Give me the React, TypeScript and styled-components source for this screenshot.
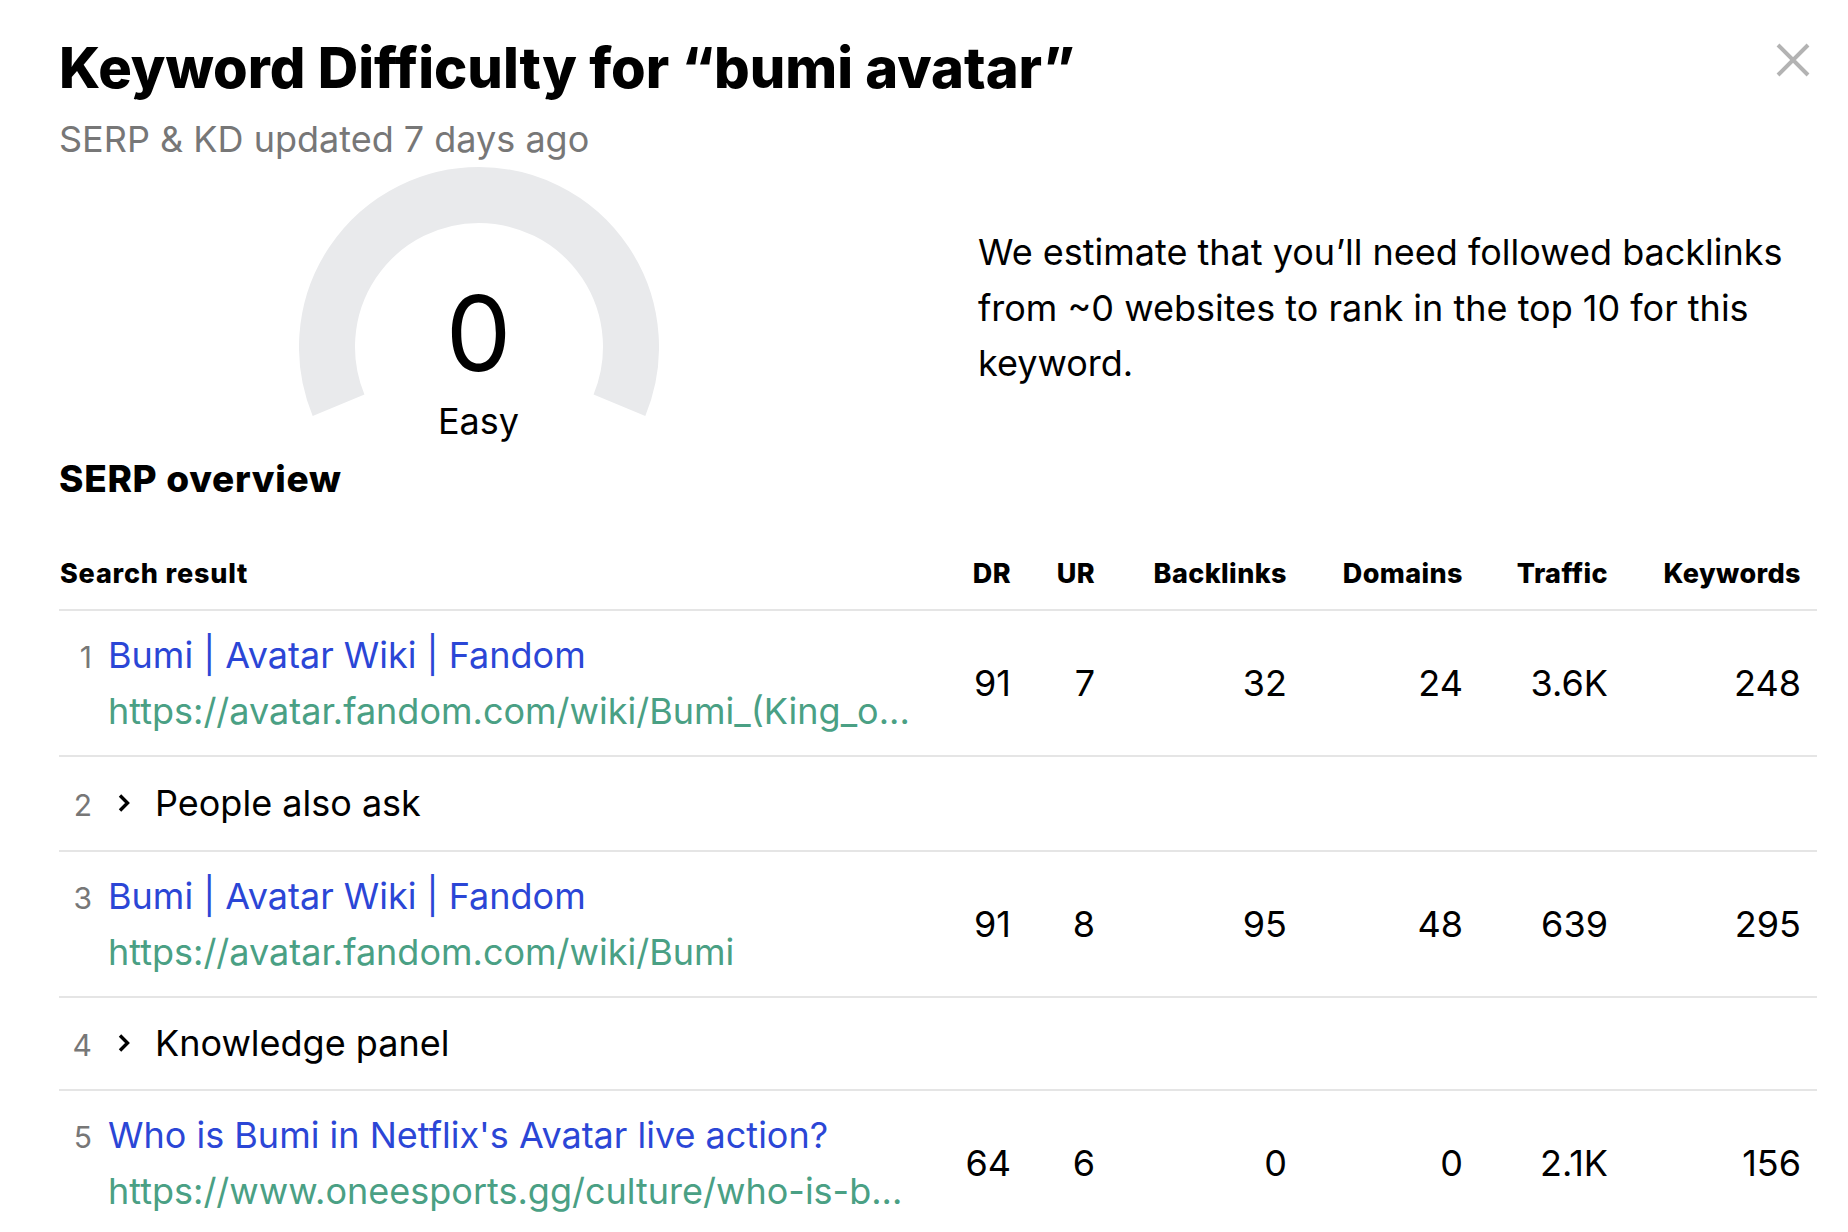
import React from "react";
import styled, { createGlobalStyle } from "styled-components";

const GlobalStyle = createGlobalStyle`
  html, body { margin: 0; padding: 0; background: #ffffff; }
  body { font-family: Inter, "Noto Sans", sans-serif; color: #000; }
`;

const Modal = styled.div`
  position: relative;
  width: 1848px;
  height: 1232px;
  box-sizing: border-box;
  padding: 34px 31px 0 59px;
  overflow: hidden;
  background: #fff;
`;

const Close = styled.button`
  position: absolute;
  top: 41px;
  right: 36px;
  width: 38px;
  height: 38px;
  padding: 0;
  border: 0;
  background: transparent;
  display: flex;
  align-items: center;
  justify-content: center;
`;

const Title = styled.h1`
  margin: 0;
  font-family: Inter, sans-serif;
  font-weight: 800;
  font-size: 56px;
  line-height: 68px;
  letter-spacing: 0;
`;

const Subtitle = styled.div`
  margin-top: 16px;
  font-size: 36px;
  line-height: 1.2;
  color: #777777;
`;

const Overview = styled.section`
  display: grid;
  grid-template-columns: 1fr 1fr;
  column-gap: 80px;
  margin-top: 6px;
`;

const GaugeCell = styled.div`
  display: flex;
  justify-content: center;
`;

const Gauge = styled.div`
  position: relative;
  width: 360px;
  height: 276px;
  display: flex;
  flex-direction: column;
  align-items: center;
  padding-top: 114px;
  box-sizing: border-box;
`;

const GaugeArc = styled.svg`
  position: absolute;
  left: 0;
  top: 0;
`;

const Score = styled.div`
  position: relative;
  font-size: 104px;
  line-height: 1;
  font-weight: 400;
`;

const ScoreLabel = styled.div`
  position: relative;
  margin-top: 18px;
  font-size: 36px;
  line-height: 1;
`;

const Estimate = styled.p`
  margin: 58px 0 0 0;
  font-size: 36px;
  line-height: 55.5px;
`;

const SectionTitle = styled.h2`
  margin: 14px 0 0 0;
  font-family: Inter, sans-serif;
  font-weight: 800;
  font-size: 37px;
  line-height: 1.2;
  letter-spacing: 0.7px;
`;

const cols = "minmax(0, 1fr) 84px 84px 192px 176px 145px 193px";

const HeadRow = styled.div`
  display: grid;
  grid-template-columns: ${cols};
  padding: 0 16px 0 1px;
  height: 70px;
  align-items: center;
  margin-top: 37px;
  border-bottom: 2px solid #e5e5e5;
`;

const HeadCell = styled.div<{ $left?: boolean }>`
  font-weight: 800;
  font-size: 27px;
  letter-spacing: ${(p) => (p.$left ? "0.8px" : "0.4px")};
  text-align: ${(p) => (p.$left ? "left" : "right")};
`;

const Row = styled.div<{ $h: number }>`
  display: grid;
  grid-template-columns: ${cols};
  padding: 0 16px 0 0;
  height: ${(p) => p.$h}px;
  align-items: center;
  border-bottom: 2px solid #e5e5e5;
`;

const ResultCell = styled.div`
  display: flex;
  align-items: baseline;
  min-width: 0;
`;

const Index = styled.span`
  flex: 0 0 33px;
  text-align: right;
  font-size: 30px;
  color: #777777;
  margin-right: 16px;
`;

const ResultText = styled.div`
  display: flex;
  flex-direction: column;
  min-width: 0;
`;

const TitleLink = styled.a`
  font-size: 36px;
  line-height: 56px;
  color: #2b46d6;
  text-decoration: none;
  white-space: nowrap;
`;

const UrlLink = styled.a`
  font-size: 36px;
  line-height: 56px;
  color: #4aa084;
  text-decoration: none;
  white-space: nowrap;
  overflow: hidden;
`;

const Feature = styled.span`
  display: inline-flex;
  align-items: baseline;
  font-size: 36px;
  line-height: 56px;
`;

const Chevron = styled.svg`
  width: 24px;
  height: 24px;
  margin: 0 19px 0 4px;
  align-self: center;
`;

const Num = styled.div`
  font-size: 36px;
  text-align: right;
`;

type Result = {
  kind: "link";
  n: number;
  title: string;
  url: string;
  dr: string;
  ur: string;
  bl: string;
  dom: string;
  tr: string;
  kw: string;
};
type Feat = { kind: "feature"; n: number; title: string; h: number };

const rows: (Result | Feat)[] = [
  {
    kind: "link",
    n: 1,
    title: "Bumi | Avatar Wiki | Fandom",
    url: "https://avatar.fandom.com/wiki/Bumi_(King_o...",
    dr: "91",
    ur: "7",
    bl: "32",
    dom: "24",
    tr: "3.6K",
    kw: "248",
  },
  { kind: "feature", n: 2, title: "People also ask", h: 93 },
  {
    kind: "link",
    n: 3,
    title: "Bumi | Avatar Wiki | Fandom",
    url: "https://avatar.fandom.com/wiki/Bumi",
    dr: "91",
    ur: "8",
    bl: "95",
    dom: "48",
    tr: "639",
    kw: "295",
  },
  { kind: "feature", n: 4, title: "Knowledge panel", h: 91 },
  {
    kind: "link",
    n: 5,
    title: "Who is Bumi in Netflix's Avatar live action?",
    url: "https://www.oneesports.gg/culture/who-is-b...",
    dr: "64",
    ur: "6",
    bl: "0",
    dom: "0",
    tr: "2.1K",
    kw: "156",
  },
];

function arcPath(cx: number, cy: number, r: number, a0: number, a1: number) {
  const rad = (d: number) => (d * Math.PI) / 180;
  const x0 = cx + r * Math.cos(rad(a0));
  const y0 = cy + r * Math.sin(rad(a0));
  const x1 = cx + r * Math.cos(rad(a1));
  const y1 = cy + r * Math.sin(rad(a1));
  const large = Math.abs(a1 - a0) > 180 ? 1 : 0;
  return `M ${x0} ${y0} A ${r} ${r} 0 ${large} 1 ${x1} ${y1}`;
}

export default function App() {
  return (
    <>
      <GlobalStyle />
      <Modal>
        <Close aria-label="Close">
          <svg width="34" height="34" viewBox="0 0 34 34">
            <path d="M2 2 L32 32 M32 2 L2 32" stroke="#b3b3b3" strokeWidth="4" fill="none" />
          </svg>
        </Close>
        <Title>Keyword Difficulty for “bumi avatar”</Title>
        <Subtitle>SERP &amp; KD updated 7 days ago</Subtitle>
        <Overview>
          <GaugeCell>
            <Gauge>
              <GaugeArc width="360" height="276" viewBox="0 0 360 276">
                <path
                  d={arcPath(180, 180, 152, 157.5, 382.5)}
                  stroke="#e9eaec"
                  strokeWidth="56"
                  fill="none"
                />
              </GaugeArc>
              <Score>0</Score>
              <ScoreLabel>Easy</ScoreLabel>
            </Gauge>
          </GaugeCell>
          <Estimate>
            We estimate that you’ll need followed backlinks from ~0 websites to rank in the top 10 for this keyword.
          </Estimate>
        </Overview>
        <SectionTitle>SERP overview</SectionTitle>
        <HeadRow>
          <HeadCell $left>Search result</HeadCell>
          <HeadCell>DR</HeadCell>
          <HeadCell>UR</HeadCell>
          <HeadCell>Backlinks</HeadCell>
          <HeadCell>Domains</HeadCell>
          <HeadCell>Traffic</HeadCell>
          <HeadCell>Keywords</HeadCell>
        </HeadRow>
        {rows.map((r) =>
          r.kind === "link" ? (
            <Row key={r.n} $h={144}>
              <ResultCell>
                <Index>{r.n}</Index>
                <ResultText>
                  <TitleLink href="#">{r.title}</TitleLink>
                  <UrlLink href="#">{r.url}</UrlLink>
                </ResultText>
              </ResultCell>
              <Num>{r.dr}</Num>
              <Num>{r.ur}</Num>
              <Num>{r.bl}</Num>
              <Num>{r.dom}</Num>
              <Num>{r.tr}</Num>
              <Num>{r.kw}</Num>
            </Row>
          ) : (
            <Row key={r.n} $h={r.h}>
              <ResultCell>
                <Index>{r.n}</Index>
                <Feature>
                  <Chevron viewBox="0 0 24 24">
                    <path d="M8 4.5 L15.5 12 L8 19.5" stroke="#000" strokeWidth="3.4" fill="none" />
                  </Chevron>
                  {r.title}
                </Feature>
              </ResultCell>
            </Row>
          )
        )}
      </Modal>
    </>
  );
}
